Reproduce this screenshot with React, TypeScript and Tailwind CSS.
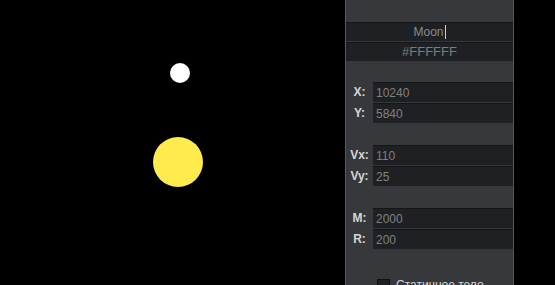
import React from 'react';

const groups = [
  [
    { label: 'X:', value: '10240' },
    { label: 'Y:', value: '5840' },
  ],
  [
    { label: 'Vx:', value: '110' },
    { label: 'Vy:', value: '25' },
  ],
  [
    { label: 'M:', value: '2000' },
    { label: 'R:', value: '200' },
  ],
];

function Field({ label, value }: { label: string; value: string }) {
  return (
    <div className="flex h-[20px] items-stretch">
      <span className="flex w-[27px] items-center justify-center text-[12px] font-semibold text-[#d6d6d6]">{label}</span>
      <div className="flex flex-1 items-center border-t border-[#141516] bg-[#1f2023] pl-[3px] text-[12px] text-[#808080]">
        {value}
      </div>
    </div>
  );
}

export default function App() {
  return (
    <div className="flex h-[285px] w-[555px] overflow-hidden bg-black font-['Liberation_Sans',Arial,sans-serif]">
      <div className="relative flex-1">
        <div className="absolute left-[170px] top-[63px] h-[20px] w-[20px] rounded-full bg-white" />
        <div className="absolute left-[153px] top-[137px] h-[50px] w-[50px] rounded-full bg-[#ffeb4d]" />
      </div>
      <aside className="flex w-[169px] flex-col border-x border-[#55585d] bg-[#36383c] pt-[22px]">
        <div className="flex flex-col gap-[1px]">
          <div className="flex h-[19px] items-center justify-center border-t border-[#141516] bg-[#1f2023] text-[12px] text-[#8a8a8a]">
            Moon<span className="ml-[1px] h-[14px] w-[1px] bg-[#cfcfcf]" />
          </div>
          <div className="flex h-[19px] items-center justify-center border-t border-[#141516] bg-[#1f2023] text-[13px] text-[#7d7d7d]">
            #FFFFFF
          </div>
        </div>
        <div className="mt-[21px] flex flex-col gap-[22px]">
          {groups.map((g, i) => (
            <div key={i} className="flex flex-col gap-[1px]">
              {g.map((f) => (
                <Field key={f.label} label={f.label} value={f.value} />
              ))}
            </div>
          ))}
        </div>
        <label className="mt-[27px] flex items-center gap-[6px] pl-[31px] text-[12px] text-[#d6d6d6]">
          <span className="h-[13px] w-[13px] border border-[#111] bg-[#1f2023]" />
          Статичное тело
        </label>
      </aside>
      <div className="w-[41px]" />
    </div>
  );
}
